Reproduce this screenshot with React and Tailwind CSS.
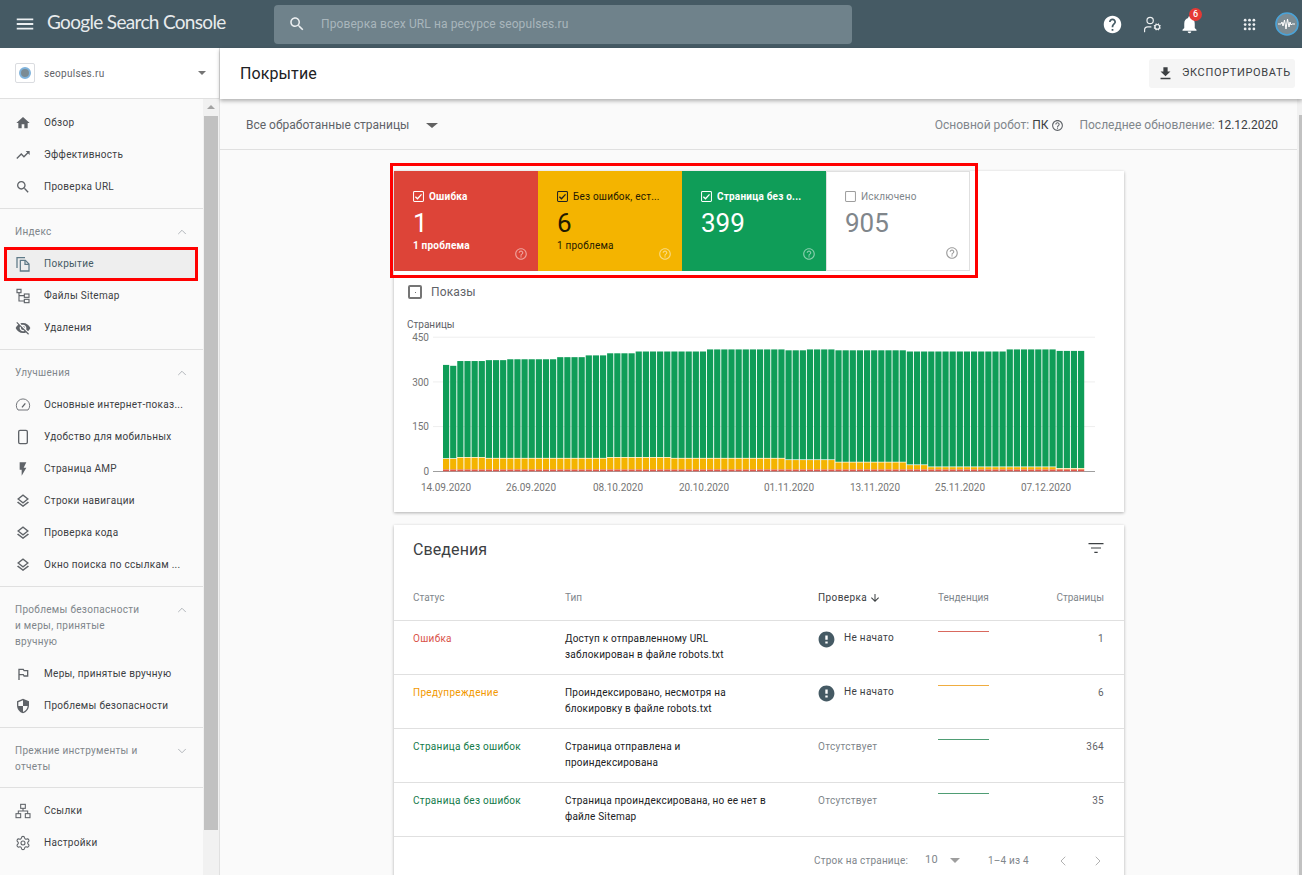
import { ChevronDown, ChevronLeft, ChevronRight, ChevronUp, Settings, UserCog } from 'lucide-react';

const P = {
  menu: 'M3 18h18v-2H3v2zm0-5h18v-2H3v2zm0-7v2h18V6H3z',
  search: 'M15.5 14h-.79l-.28-.27C15.41 12.59 16 11.11 16 9.5 16 5.91 13.09 3 9.5 3S3 5.91 3 9.5 5.91 16 9.5 16c1.61 0 3.09-.59 4.23-1.57l.27.28v.79l5 4.99L20.49 19l-4.99-5zm-6 0C7.01 14 5 11.99 5 9.5S7.01 5 9.5 5 14 7.01 14 9.5 11.99 14 9.5 14z',
  home: 'M10 20v-6h4v6h5v-8h3L12 3 2 12h3v8z',
  trending: 'M16 6l2.29 2.29-4.88 4.88-4-4L2 16.59 3.41 18l6-6 4 4 6.3-6.29L22 12V6z',
  eyeOff: 'M12 7c2.76 0 5 2.24 5 5 0 .65-.13 1.26-.36 1.83l2.92 2.92c1.51-1.26 2.7-2.89 3.43-4.75-1.73-4.39-6-7.5-11-7.5-1.4 0-2.74.25-3.98.7l2.16 2.16C10.74 7.13 11.35 7 12 7zM2 4.27l2.28 2.28.46.46C3.08 8.3 1.78 10.02 1 12c1.73 4.39 6 7.5 11 7.5 1.55 0 3.03-.3 4.38-.84l.42.42L19.73 22 21 20.73 3.27 3 2 4.27zM7.53 9.8l1.55 1.55c-.05.21-.08.43-.08.65 0 1.66 1.34 3 3 3 .22 0 .44-.03.65-.08l1.55 1.55c-.67.33-1.41.53-2.2.53-2.76 0-5-2.24-5-5 0-.79.2-1.53.53-2.2zm4.31-.78l3.15 3.15.02-.16c0-1.66-1.34-3-3-3l-.17.01z',
  bolt: 'M7 2v11h3v9l7-12h-4l4-8z',
  layers: 'M11.99 18.54l-7.37-5.73L3 14.07l9 7 9-7-1.63-1.27-7.38 5.74zM12 16l7.36-5.73L21 9l-9-7-9 7 1.63 1.27L12 16zm0-11.47L17.74 9 12 13.47 6.26 9 12 4.53z',
  flag: 'M14 6l-1-2H5v17h2v-7h5l1 2h7V6h-6zm4 8h-4l-1-2H7V6h5l1 2h5v6z',
  shield: 'M12 1L3 5v6c0 5.55 3.84 10.74 9 12 5.16-1.26 9-6.45 9-12V5l-9-4zm0 10.99h7c-.53 4.12-3.28 7.79-7 8.94V12H5V6.3l7-3.11v8.8z',
  helpO: 'M11 18h2v-2h-2v2zm1-16C6.48 2 2 6.48 2 12s4.48 10 10 10 10-4.48 10-10S17.52 2 12 2zm0 18c-4.41 0-8-3.59-8-8s3.59-8 8-8 8 3.59 8 8-3.59 8-8 8zm0-14c-2.21 0-4 1.79-4 4h2c0-1.1.9-2 2-2s2 .9 2 2c0 2-3 1.75-3 5h2c0-2.25 3-2.5 3-5 0-2.21-1.79-4-4-4z',
  help: 'M12 2C6.48 2 2 6.48 2 12s4.48 10 10 10 10-4.48 10-10S17.52 2 12 2zm1 17h-2v-2h2v2zm2.07-7.75l-.9.92C13.45 12.9 13 13.5 13 15h-2v-.5c0-1.1.45-2.1 1.17-2.83l1.24-1.26c.37-.36.59-.86.59-1.41 0-1.1-.9-2-2-2s-2 .9-2 2H8c0-2.21 1.79-4 4-4s4 1.79 4 4c0 .88-.36 1.68-.93 2.25z',
  bell: 'M12 22c1.1 0 2-.9 2-2h-4c0 1.1.89 2 2 2zm6-6v-5c0-3.07-1.64-5.64-4.5-6.32V4c0-.83-.67-1.5-1.5-1.5s-1.5.67-1.5 1.5v.68C7.63 5.36 6 7.92 6 11v5l-2 2v1h16v-1l-2-2z',
  download: 'M19 9h-4V3H9v6H5l7 7 7-7zM5 18v2h14v-2H5z',
  arrowDown: 'M20 12l-1.41-1.41L13 16.17V4h-2v12.17l-5.58-5.59L4 12l8 8 8-8z',
  filter: 'M10 18h4v-1.4h-4v1.4zM3 6v1.4h18V6H3zm3 6.7h12v-1.4H6v1.4z',
  error: 'M12 2C6.48 2 2 6.48 2 12s4.48 10 10 10 10-4.48 10-10S17.52 2 12 2zm1.5 15h-3v-2.6h3V17zm0-4.6h-3V7h3v5.4z',
};

function Ic({ d, className }) {
  return (
    <svg viewBox="0 0 24 24" fill="currentColor" className={className}>
      <path d={d} />
    </svg>
  );
}

function CopyIcon({ className }) {
  return (
    <svg viewBox="0 0 24 24" fill="none" stroke="currentColor" strokeWidth="1.9" className={className}>
      <path d="M3 18V2.5h12" />
      <path d="M8 6.5h7.5l5.5 5.5v10.5H8z" />
      <path d="M15 6.5V12.5h6" />
    </svg>
  );
}

function PhoneIcon({ className }) {
  return (
    <svg viewBox="0 0 24 24" fill="none" stroke="currentColor" strokeWidth="2" className={className}>
      <rect x="5.5" y="2" width="13" height="20" rx="2" />
    </svg>
  );
}

function SitemapIcon({ className }) {
  return (
    <svg viewBox="0 0 24 24" fill="none" stroke="currentColor" strokeWidth="1.7" className={className}>
      <rect x="3" y="2" width="6" height="5" />
      <rect x="14" y="9" width="7" height="5" />
      <rect x="14" y="17" width="7" height="5" />
      <path d="M6 7v12.5h8M6 11.5h8" />
    </svg>
  );
}

function LinksIcon({ className }) {
  return (
    <svg viewBox="0 0 24 24" fill="none" stroke="currentColor" strokeWidth="1.6" className={className}>
      <rect x="8.5" y="2" width="7" height="6" />
      <rect x="1.5" y="16" width="7" height="6" />
      <rect x="15.5" y="16" width="7" height="6" />
      <path d="M12 8v4M5 16v-4h14v4" />
    </svg>
  );
}

function GaugeIcon({ className }) {
  return (
    <svg viewBox="0 0 24 24" fill="none" stroke="currentColor" strokeWidth="1.3" className={className}>
      <path d="M4.5 19.5a10 10 0 1 1 15 0z" />
      <path d="M10.5 15.5l5-6" strokeWidth="2" />
    </svg>
  );
}

function AppsIcon({ className }) {
  const dots = [5, 12, 19];
  return (
    <svg viewBox="0 0 24 24" fill="currentColor" className={className}>
      {dots.map((y) => dots.map((x) => <circle key={`${x}-${y}`} cx={x} cy={y} r="2.2" />))}
    </svg>
  );
}

function Checkbox({ checked, color }) {
  return (
    <svg viewBox="0 0 12 12" className="w-[11px] h-[11px] shrink-0">
      <rect x="0.6" y="0.6" width="10.8" height="10.8" rx="1" fill="none" stroke={color} strokeWidth="1.1" />
      {checked ? <path d="M2.6 6.2l2.3 2.3 4.4-4.8" fill="none" stroke={color} strokeWidth="1.4" /> : null}
    </svg>
  );
}

function Avatar() {
  return (
    <svg viewBox="0 0 24 24" className="w-[24px] h-[24px]">
      <circle cx="12" cy="12" r="11" fill="#7b8b93" stroke="#4aa3d8" strokeWidth="1.6" />
      <path d="M3 12h3l1-2 1 4 1.5-6 1.5 9 1.5-10 1.5 8 1-5 1 3 1-1h3" fill="none" stroke="#fff" strokeWidth="1" />
    </svg>
  );
}

function NavItem({ icon, label, active }) {
  return (
    <div
      className={
        active
          ? 'h-[34px] ml-[4px] mr-[5px] my-[-1px] pl-[8px] border-[3px] border-[#f00] bg-[#eeeeee] flex items-center gap-[13px] text-[#455a64] relative'
          : 'h-[32px] pl-[15px] flex items-center gap-[13px] text-[#3c4043]'
      }
    >
      <span className={active ? 'w-[16px] h-[16px] text-[#5f7a88]' : 'w-[16px] h-[16px] text-[#5f6368]'}>{icon}</span>
      <span className="pb-[2px] text-[10px] tracking-[0.3px] whitespace-nowrap">{label}</span>
    </div>
  );
}

function SectionTitle({ lines, open }) {
  return (
    <div className="flex justify-between pl-[15px] pr-[14px] pt-[15px] pb-[8px] text-[#80868b]">
      <div className="text-[10px] tracking-[0.3px] leading-[16px]">
        {lines.map((l) => (
          <div key={l}>{l}</div>
        ))}
      </div>
      {open ? (
        <ChevronUp className="w-[14px] h-[14px] mt-[1px] text-[#9aa0a6]" strokeWidth={1.3} />
      ) : (
        <ChevronDown className="w-[14px] h-[14px] mt-[1px] text-[#9aa0a6]" strokeWidth={1.3} />
      )}
    </div>
  );
}

const ic = 'w-full h-full';

function Sidebar() {
  return (
    <aside className="w-[220px] shrink-0 flex flex-col border-r border-[#e0e0e0] bg-[#fafafa]">
      <div className="h-[51px] shrink-0 flex items-center pl-[15px] pr-[13px] border-b border-[#e0e0e0] bg-white">
        <span className="w-[20px] h-[20px] border border-[#dadce0] rounded-[2px] flex items-center justify-center">
          <span className="w-[12px] h-[12px] rounded-full bg-[#7b8b93] border-2 border-[#7fb3dc]" />
        </span>
        <span className="ml-[9px] text-[10px] tracking-[0.3px] text-[#5f6368] flex-1">seopulses.ru</span>
        <span className="w-0 h-0 border-x-[4px] border-x-transparent border-t-[4px] border-t-[#757575]" />
      </div>
      <div className="flex-1 flex min-h-0">
        <nav className="w-[203px] shrink-0 pt-[8px] overflow-hidden">
          <NavItem icon={<Ic d={P.home} className={ic} />} label="Обзор" />
          <NavItem icon={<Ic d={P.trending} className={ic} />} label="Эффективность" />
          <NavItem icon={<Ic d={P.search} className={ic} />} label="Проверка URL" />
          <div className="mt-[5px] border-t border-[#e0e0e0]">
            <SectionTitle lines={['Индекс']} open />
            <NavItem active icon={<CopyIcon className={ic} />} label="Покрытие" />
            <NavItem icon={<SitemapIcon className={ic} />} label="Файлы Sitemap" />
            <NavItem icon={<Ic d={P.eyeOff} className={ic} />} label="Удаления" />
          </div>
          <div className="mt-[5px] border-t border-[#e0e0e0]">
            <SectionTitle lines={['Улучшения']} open />
            <NavItem icon={<GaugeIcon className={ic} />} label="Основные интернет-показ..." />
            <NavItem icon={<PhoneIcon className={ic} />} label="Удобство для мобильных" />
            <NavItem icon={<Ic d={P.bolt} className={ic} />} label="Страница AMP" />
            <NavItem icon={<Ic d={P.layers} className={ic} />} label="Строки навигации" />
            <NavItem icon={<Ic d={P.layers} className={ic} />} label="Проверка кода" />
            <NavItem icon={<Ic d={P.layers} className={ic} />} label="Окно поиска по ссылкам ..." />
          </div>
          <div className="mt-[5px] border-t border-[#e0e0e0]">
            <SectionTitle lines={['Проблемы безопасности', 'и меры, принятые', 'вручную']} open />
            <NavItem icon={<Ic d={P.flag} className={ic} />} label="Меры, принятые вручную" />
            <NavItem icon={<Ic d={P.shield} className={ic} />} label="Проблемы безопасности" />
          </div>
          <div className="mt-[5px] border-t border-[#e0e0e0]">
            <SectionTitle lines={['Прежние инструменты и', 'отчеты']} />
          </div>
          <div className="mt-[4px] pt-[7px] border-t border-[#e0e0e0]">
            <NavItem icon={<LinksIcon className={ic} />} label="Ссылки" />
            <NavItem icon={<Settings className={ic} strokeWidth={1.6} />} label="Настройки" />
          </div>
        </nav>
        <div className="flex-1 bg-[#f1f1f1] flex flex-col items-center px-[1px]">
          <span className="mt-[6px] mb-[7px] w-0 h-0 border-x-[4px] border-x-transparent border-b-[4px] border-b-[#a3a3a3]" />
          <div className="w-full h-[714px] bg-[#c1c1c1]" />
        </div>
      </div>
    </aside>
  );
}

const tops = [
  [357, 1], [354, 1], [370, 4], [373, 3], [376, 7], [383, 4], [389, 3], [396, 4], [402, 10], [409, 11],
  [406, 3], [409, 4], [406, 10], [402, 14], [409, 7], [404, 4],
];
const mids = [
  [44, 2], [48, 4], [45, 17], [48, 9], [45, 16], [40, 7], [32, 10], [23, 3], [16, 18], [11, 4],
];
const expand = (list) => list.flatMap(([v, n]) => Array(n).fill(v));
const topVals = expand(tops);
const midVals = expand(mids);
const dates = [
  ['14.09.2020', 446], ['26.09.2020', 531], ['08.10.2020', 618], ['20.10.2020', 704],
  ['01.11.2020', 789], ['13.11.2020', 875], ['25.11.2020', 960], ['07.12.2020', 1046],
];

function Chart() {
  const y = (v) => 471.3 - v * 0.298;
  return (
    <svg viewBox="394 318 730 180" className="w-[730px] h-[180px] block">
      <text x="407" y="328" fontSize="10" fill="#5f6368">Страницы</text>
      {[450, 300, 150].map((v) => (
        <line key={v} x1="433" x2="1095" y1={y(v)} y2={y(v)} stroke="#eeeeee" />
      ))}
      {[450, 300, 150, 0].map((v) => (
        <text key={v} x="429" y={y(v) + 3.7} fontSize="10" textAnchor="end" fill="#757575">{v}</text>
      ))}
      <line x1="433" x2="1095" y1="471.5" y2="471.5" stroke="#9e9e9e" />
      {topVals.map((v, i) => {
        const x = 443 + i * 7.135;
        const m = midVals[i];
        return (
          <g key={i}>
            <rect x={x} y={y(v)} width="6.2" height={y(m) - y(v)} fill="#0f9d58" />
            <rect x={x} y={y(m) + 0.7} width="6.2" height={y(6) - y(m) - 0.7} fill="#f4b400" />
            <rect x={x} y={y(6)} width="6.2" height={y(0) - y(6)} fill="#e0584c" />
          </g>
        );
      })}
      {dates.map(([d, x]) => (
        <text key={d} x={x} y="490.7" fontSize="10" textAnchor="middle" fill="#757575">{d}</text>
      ))}
    </svg>
  );
}

function Tile({ bg, fg, box, label, bold, value, sub, subBold, help, bordered, check = true }) {
  return (
    <div
      className={
        bordered
          ? `w-[144px] h-[100px] pl-[18px] pt-[19px] relative border border-[#e0e0e0] ${bg}`
          : `w-[144px] h-[100px] pl-[19px] pt-[20px] relative ${bg}`
      }
    >
      <div className="flex items-center gap-[5px] h-[10px]">
        <Checkbox checked={check} color={box} />
        <span className={`text-[10px] tracking-[0.2px] whitespace-nowrap ${fg} ${bold ? 'font-bold' : ''}`}>{label}</span>
      </div>
      <div className={`mt-[9px] text-[26px] leading-[26px] ${fg}`}>{value}</div>
      {sub ? <div className={`mt-[2px] text-[10px] tracking-[0.2px] ${fg} ${subBold ? 'font-bold' : ''}`}>{sub}</div> : null}
      <Ic d={P.helpO} className={`absolute right-[10px] bottom-[10px] w-[14px] h-[14px] ${help}`} />
    </div>
  );
}

const rows = [
  { status: 'Ошибка', color: 'text-[#d9534a]', type: ['Доступ к отправленному URL', 'заблокирован в файле robots.txt'], started: true, line: 'bg-[#d9695e]', n: '1' },
  { status: 'Предупреждение', color: 'text-[#f29900]', type: ['Проиндексировано, несмотря на', 'блокировку в файле robots.txt'], started: true, line: 'bg-[#f0ad40]', n: '6' },
  { status: 'Страница без ошибок', color: 'text-[#137a4a]', type: ['Страница отправлена и', 'проиндексирована'], line: 'bg-[#4f9d74]', n: '364' },
  { status: 'Страница без ошибок', color: 'text-[#137a4a]', type: ['Страница проиндексирована, но ее нет в', 'файле Sitemap'], line: 'bg-[#4f9d74]', n: '35' },
];

function Row({ r }) {
  return (
    <div className="h-[54px] border-t border-[#e0e0e0] flex pl-[19px] pr-[20px] pt-[10px] text-[10px] tracking-[0.3px] leading-[16px]">
      <div className={`w-[152px] ${r.color}`}>{r.status}</div>
      <div className="w-[253px] text-[#202124] tracking-[0.2px]">
        {r.type.map((t) => (
          <div key={t}>{t}</div>
        ))}
      </div>
      <div className="w-[120px]">
        {r.started ? (
          <div className="flex items-center gap-[8px] -mt-[1px] text-[#3c4043]">
            <Ic d={P.error} className="w-[19px] h-[19px] -ml-[1px] text-[#455a64]" />
            <span className="-mt-[3px]">Не начато</span>
          </div>
        ) : (
          <span className="text-[#80868b]">Отсутствует</span>
        )}
      </div>
      <div className="w-[51px]">
        <div className={`h-[1px] ${r.line}`} />
      </div>
      <div className="flex-1 text-right text-[#5f6368]">{r.n}</div>
    </div>
  );
}

export default function App() {
  return (
    <div className="w-[1302px] h-[875px] overflow-hidden flex flex-col bg-[#fafafa] font-['Roboto',sans-serif]">
      <header className="h-[48px] shrink-0 bg-[#455a64] flex items-center text-white">
        <Ic d={P.menu} className="ml-[14px] w-[22px] h-[22px] text-[#eceff1]" />
        <span className="ml-[11px] w-[227px] -mt-[3px] text-[19px] tracking-[-0.67px] text-[#e8ebed] font-['Lato',sans-serif] whitespace-nowrap">
          Google Search Console
        </span>
        <div className="w-[578px] h-[39px] rounded-[4px] bg-[#6f828b] flex items-center pl-[14px]">
          <Ic d={P.search} className="w-[18px] h-[18px] text-[#eceff1]" />
          <span className="ml-[15px] text-[12px] tracking-[0.1px] text-[#a9b6bc]">Проверка всех URL на ресурсе seopulses.ru</span>
        </div>
        <div className="ml-auto flex items-center relative">
          <Ic d={P.help} className="w-[21px] h-[21px] mr-[20px]" />
          <UserCog className="w-[19px] h-[19px] mr-[17px] text-[#eceff1]" strokeWidth={1.5} />
          <span className="relative mr-[42px] w-[21px] h-[21px]">
            <Ic d={P.bell} className="w-[21px] h-[21px]" />
            <span className="absolute -top-[6px] left-[10px] w-[13px] h-[13px] rounded-full bg-[#e53935] text-[9px] leading-[13px] text-center font-medium">6</span>
          </span>
          <AppsIcon className="w-[15px] h-[15px] mr-[18px] text-[#eceff1]" />
          <span className="mr-[3px] block"><Avatar /></span>
        </div>
      </header>
      <div className="flex-1 flex min-h-0">
        <Sidebar />
        <main className="flex-1 min-w-0 flex flex-col">
          <div className="h-[51px] shrink-0 bg-white flex items-center pl-[20px] pr-[7px] shadow-[0_2px_4px_rgba(0,0,0,0.3)] relative z-10">
            <h1 className="text-[16px] tracking-[0.1px] text-[#202124] flex-1">Покрытие</h1>
            <div className="h-[29px] w-[146px] rounded-[3px] bg-[#f5f5f5] flex items-center pl-[8px] text-[#3c4043]">
              <Ic d={P.download} className="w-[17px] h-[17px]" />
              <span className="ml-[8px] text-[11px] tracking-[0.65px] whitespace-nowrap">ЭКСПОРТИРОВАТЬ</span>
            </div>
          </div>
          <div className="flex-1 min-h-0 flex">
            <div className="flex-1 min-w-0 flex flex-col">
              <div className="h-[51px] shrink-0 border-b border-[#e0e0e0] flex items-center pl-[26px] pr-[19px] pt-[2px] text-[12px]">
                <span className="text-[#5f6368]">Все обработанные страницы</span>
                <span className="ml-[17px] w-0 h-0 border-x-[6px] border-x-transparent border-t-[5px] border-t-[#616161]" />
                <div className="ml-auto flex items-center text-[#80868b]">
                  Основной робот:&nbsp;<span className="text-[#3c4043]">ПК</span>
                  <Ic d={P.helpO} className="ml-[3px] w-[13px] h-[13px] text-[#5f6368]" />
                  <span className="ml-[15px]">Последнее обновление:&nbsp;</span>
                  <span className="text-[#3c4043]">12.12.2020</span>
                </div>
              </div>
              <div className="flex-1 min-h-0 overflow-hidden pl-[174px] pt-[21px]">
                <section className="w-[730px] h-[341px] bg-white shadow-[0_1px_3px_rgba(0,0,0,0.3)] relative">
                  <div className="flex">
                    <Tile bg="bg-[#dd4438]" fg="text-white" box="#fff" label="Ошибка" bold value="1" sub="1 проблема" subBold help="text-white/50" />
                    <Tile bg="bg-[#f4b400]" fg="text-[#1f1a00]" box="#202124" label="Без ошибок, ест..." value="6" sub="1 проблема" help="text-white/50" />
                    <Tile bg="bg-[#0f9d58]" fg="text-white" box="#fff" label="Страница без о..." bold value="399" help="text-white/50" />
                    <Tile bg="bg-white" bordered fg="text-[#80868b]" box="#9e9e9e" check={false} label="Исключено" value="905" help="text-[#9e9e9e]" />
                  </div>
                  <div className="absolute left-[-4px] top-[-8px] w-[588px] h-[115px] border-[3px] border-[#f00]" />
                  <div className="flex items-center pl-[14px] pt-[14px] h-[28px]">
                    <span className="w-[14px] h-[14px] rounded-[2px] border-2 border-[#757575] flex items-center justify-center">
                      <span className="w-[1px] h-[1px] bg-[#757575]" />
                    </span>
                    <span className="ml-[9px] text-[12px] tracking-[0.15px] text-[#5f6368]">Показы</span>
                  </div>
                  <div className="mt-[19px]">
                    <Chart />
                  </div>
                </section>
                <section className="mt-[13px] w-[730px] h-[420px] bg-white shadow-[0_1px_3px_rgba(0,0,0,0.3)]">
                  <div className="h-[50px] flex items-center pl-[19px] pr-[18px] justify-between">
                    <h2 className="text-[16px] tracking-[0.1px] text-[#3c4043]">Сведения</h2>
                    <Ic d={P.filter} className="w-[20px] h-[20px] text-[#3c4043] -mt-[4px]" />
                  </div>
                  <div className="h-[45px] flex items-center pl-[19px] pr-[20px] text-[10px] text-[#80868b]">
                    <div className="w-[152px]">Статус</div>
                    <div className="w-[253px]">Тип</div>
                    <div className="w-[120px] flex items-center text-[#3c4043] tracking-[0.4px]">
                      Проверка
                      <Ic d={P.arrowDown} className="ml-[2px] w-[12px] h-[12px]" />
                    </div>
                    <div className="w-[80px]">Тенденция</div>
                    <div className="flex-1 text-right">Страницы</div>
                  </div>
                  {rows.map((r, i) => (
                    <Row key={i} r={r} />
                  ))}
                  <div className="h-[48px] border-t border-[#e0e0e0] flex items-center pl-[420px] text-[10px] tracking-[0.2px] text-[#80868b]">
                    Строк на странице:
                    <span className="ml-[17px] text-[11px]">10</span>
                    <span className="ml-[12px] w-0 h-0 border-x-[5px] border-x-transparent border-t-[5px] border-t-[#9e9e9e]" />
                    <span className="ml-[28px]">1–4 из 4</span>
                    <ChevronLeft className="ml-[26px] w-[16px] h-[16px] text-[#9e9e9e]" strokeWidth={1.2} />
                    <ChevronRight className="ml-[19px] w-[16px] h-[16px] text-[#9e9e9e]" strokeWidth={1.2} />
                  </div>
                </section>
              </div>
            </div>
            <div className="w-[5px] shrink-0 bg-[#f1f1f1] pl-[2px] pt-[16px]">
              <div className="h-full bg-[#c1c1c1]" />
            </div>
          </div>
        </main>
      </div>
    </div>
  );
}
